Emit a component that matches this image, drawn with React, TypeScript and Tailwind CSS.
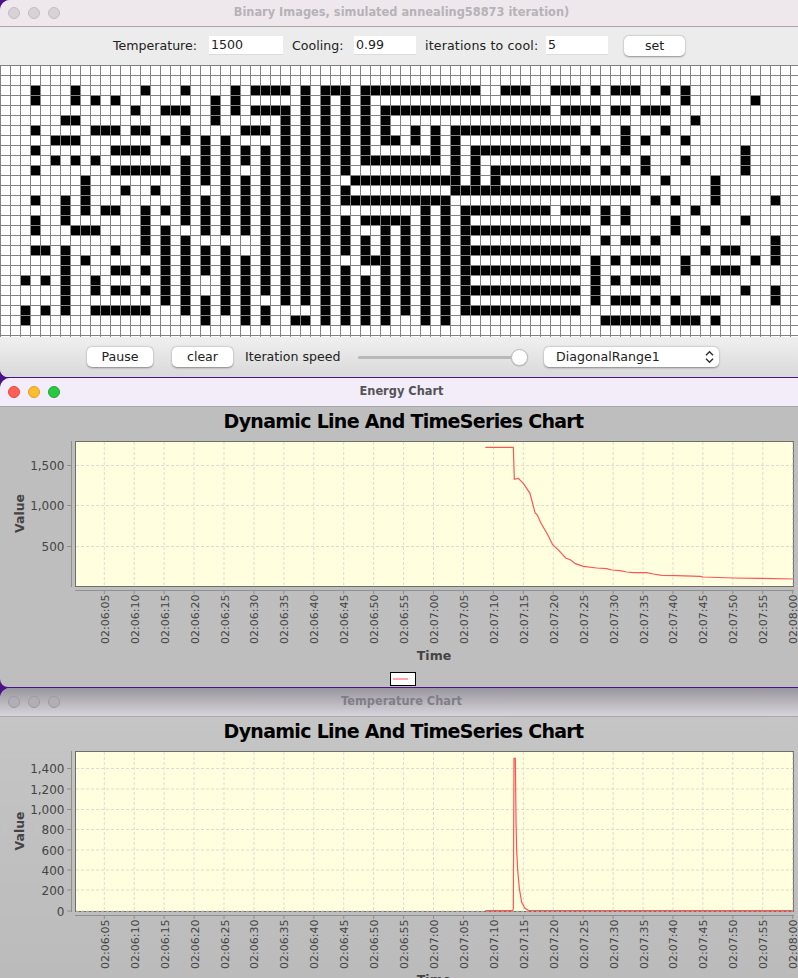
import React from "react";

// black cells per grid row, [from, to] column ranges
const rows: number[][][] = [
  [],
  [],
  [[3,3],[7,7],[14,14],[18,18],[23,23],[25,28],[30,30],[32,34],[36,47],[50,52],[55,57],[59,59],[61,63],[66,66],[68,68]],
  [[3,3],[7,7],[9,9],[11,11],[21,21],[23,23],[30,30],[32,32],[34,34],[36,36],[68,68],[75,75]],
  [[13,13],[16,18],[21,21],[23,23],[25,28],[30,30],[32,32],[34,34],[36,36],[38,54],[56,59],[61,62],[64,66]],
  [[6,7],[21,21],[28,28],[30,30],[32,32],[34,34],[36,36],[38,38],[69,69]],
  [[3,3],[9,11],[13,14],[18,18],[24,26],[28,28],[30,30],[32,32],[34,34],[36,36],[38,38],[41,41],[43,43],[45,57],[59,59],[62,62],[66,66]],
  [[5,7],[16,16],[18,18],[20,20],[22,22],[28,28],[30,30],[32,32],[34,34],[36,36],[38,39],[41,41],[43,43],[45,45],[62,62],[64,64],[68,68]],
  [[3,3],[11,14],[20,20],[22,22],[24,24],[26,26],[28,28],[30,30],[32,32],[34,34],[36,36],[43,43],[45,45],[47,56],[58,58],[60,60],[62,62],[74,74]],
  [[5,5],[7,7],[9,9],[18,18],[20,20],[22,22],[24,24],[26,26],[28,28],[30,30],[32,32],[34,34],[36,43],[45,45],[47,47],[64,64],[68,68],[74,74]],
  [[3,3],[11,16],[18,18],[20,20],[22,22],[26,26],[28,28],[30,30],[32,32],[34,34],[45,45],[47,47],[49,58],[60,60],[62,62],[64,64],[74,74]],
  [[8,8],[18,18],[20,20],[22,22],[24,24],[26,26],[28,28],[30,30],[32,32],[35,45],[47,47],[49,49],[66,66],[71,71]],
  [[8,8],[12,12],[15,15],[18,18],[22,22],[24,24],[26,26],[28,28],[30,30],[32,32],[34,34],[45,63],[71,71]],
  [[3,3],[6,6],[8,8],[18,18],[20,20],[22,22],[24,24],[26,26],[28,28],[30,30],[32,32],[34,44],[65,65],[67,67],[71,71],[77,77]],
  [[6,6],[8,8],[10,11],[14,14],[16,16],[18,18],[20,20],[22,22],[24,24],[26,26],[28,28],[30,30],[32,32],[42,42],[44,44],[46,54],[56,58],[60,60],[62,62],[69,69]],
  [[3,3],[6,6],[14,14],[18,18],[20,20],[22,22],[24,24],[26,26],[28,28],[30,30],[32,32],[34,34],[36,40],[42,42],[44,44],[46,46],[60,60],[62,62],[67,67],[74,74]],
  [[3,3],[7,9],[14,14],[16,16],[20,20],[22,22],[24,24],[26,26],[28,28],[30,30],[32,32],[34,34],[38,38],[40,40],[42,42],[44,44],[46,58],[67,67],[70,70]],
  [[14,14],[16,16],[18,18],[26,26],[28,28],[30,30],[32,32],[34,34],[36,36],[38,38],[40,40],[42,42],[44,44],[46,46],[60,60],[62,63],[65,65],[77,77]],
  [[3,4],[6,6],[11,11],[14,14],[16,16],[18,18],[20,20],[22,22],[26,26],[28,28],[30,30],[32,32],[34,34],[36,36],[38,38],[40,40],[42,42],[44,44],[46,57],[70,70],[72,73],[77,77]],
  [[6,6],[8,8],[16,16],[18,18],[20,20],[22,22],[24,24],[26,26],[28,28],[30,30],[32,32],[36,38],[40,40],[42,42],[44,44],[46,46],[59,59],[61,61],[63,65],[68,68],[75,75],[77,77]],
  [[6,6],[11,12],[14,14],[16,16],[18,18],[20,20],[22,22],[24,24],[26,26],[28,28],[30,30],[32,32],[34,34],[38,38],[40,40],[42,42],[44,44],[46,57],[59,59],[68,68],[71,73]],
  [[2,2],[4,4],[6,6],[9,9],[16,16],[18,18],[22,22],[24,24],[26,26],[28,28],[30,30],[32,32],[34,34],[36,36],[38,38],[40,40],[42,42],[44,44],[46,46],[59,59],[61,61],[63,65]],
  [[6,6],[9,9],[11,12],[14,14],[16,16],[18,18],[22,22],[24,24],[26,26],[28,28],[30,30],[32,32],[34,34],[36,36],[38,38],[40,40],[42,42],[44,44],[46,57],[59,59],[74,74],[77,77]],
  [[6,6],[16,16],[18,18],[20,20],[22,22],[24,24],[28,28],[30,30],[32,32],[34,34],[36,36],[38,38],[40,40],[42,42],[44,44],[46,46],[59,59],[61,63],[65,65],[67,67],[70,71],[77,77]],
  [[2,2],[4,4],[6,6],[9,14],[18,18],[20,20],[22,22],[24,24],[26,26],[32,32],[34,34],[36,36],[38,38],[40,40],[42,42],[44,44],[46,57]],
  [[2,2],[20,20],[24,24],[26,26],[29,30],[32,32],[34,34],[36,36],[38,38],[42,42],[44,44],[60,65],[67,69],[71,71]],
  [],
  [],
];

const isBlack = (r: number, c: number) => rows[r].some(([a, b]) => c >= a && c <= b);

const CellGrid = () => (
  <div className="h-[272px] w-full shrink-0 overflow-hidden bg-white">
    {rows.map((_, r) => (
      <div key={r} className="flex h-[10px] w-[800px]">
        {Array.from({ length: 80 }, (_, c) => (
          <div
            key={c}
            className={`h-[10px] w-[10px] shrink-0 border-t border-l border-[#828282] ${isBlack(r, c) ? "bg-black" : "bg-white"}`}
          />
        ))}
      </div>
    ))}
  </div>
);

const Lights = ({ colors }: { colors: string[] }) => (
  <div className="flex gap-2 pl-2">
    {colors.map((cn, i) => (
      <span key={i} className={`h-3 w-3 rounded-full border ${cn}`} />
    ))}
  </div>
);

const TitleBar = ({
  title,
  lights,
  className,
  textClass,
}: {
  title: string;
  lights: string[];
  className: string;
  textClass: string;
}) => (
  <div className={`relative flex shrink-0 items-center border-b border-[#a9a7ab] ${className}`}>
    <Lights colors={lights} />
    <p className={`absolute left-[5px] right-0 text-center text-[11.4px] font-bold ${textClass}`}>{title}</p>
  </div>
);

const Field = ({ value, w }: { value: string; w: string }) => (
  <div className={`mb-px flex h-[19px] items-center border-b border-[#dcdcdc] bg-white pl-[2px] text-[#222] ${w}`}>
    {value}
  </div>
);

const MacButton = ({ label, w }: { label: string; w: string }) => (
  <button className={`h-5 rounded-[5px] bg-white text-[12.6px] leading-[18px] text-[#222] shadow-[0_0.5px_2px_rgba(0,0,0,0.4)] ${w}`}>
    {label}
  </button>
);

const pad = (n: number) => String(n).padStart(2, "0");
const timeTicks = Array.from({ length: 24 }, (_, i) => {
  const total = 6 * 60 + 5 + i * 5;
  return { x: 104.3 + i * 29.93, label: `02:${pad(Math.floor(total / 60))}:${pad(total % 60)}` };
});

// traced at 3x from x=460, so scale back down into svg coords
const toPoints = (raw: string) =>
  raw
    .split(" ")
    .map((p) => {
      const [x, y] = p.split(",").map(Number);
      return `${460 + x / 3},${y / 3 - 4}`;
    })
    .join(" ");

const energyLine = toPoints(
  "76,52 160,52 163,148 175,145 190,160 210,190 225,248 232,255 243,280 262,312 278,344 297,362 317,384 332,390 346,401 370,409 410,414 440,416 456,420 480,422 500,426 520,428 560,428 580,432 605,436 650,437 720,439 730,441 820,444 900,445 998,447"
);

const tempLine = toPoints(
  "76,512 158,512 160,505 162,55 166,55 168,240 170,330 173,390 178,445 185,487 195,505 205,511 998,512"
);

const AXIS = "#8f8f8f";
const LABEL = "#444444";
const GRIDLINE = "#dcdcd0";

const Chart = ({
  height,
  top,
  bottom,
  ticks,
  points,
  legend,
  timeY,
}: {
  height: number;
  top: number;
  bottom: number;
  ticks: { y: number; label: string }[];
  points: string;
  legend?: boolean;
  timeY: number;
}) => (
  <svg width="798" height={height} className="block shrink-0" fontFamily="'DejaVu Sans', sans-serif">
    <rect x="75.5" y={top + 0.5} width="718" height={bottom - top} fill="#ffffe0" stroke="#6f6f6a" />
    {timeTicks.map((t) => (
      <line key={t.label} x1={t.x} x2={t.x} y1={top + 1} y2={bottom} stroke={GRIDLINE} strokeDasharray="3 2" />
    ))}
    {ticks.map((t) => (
      <line key={t.label} x1="76" x2="793" y1={t.y} y2={t.y} stroke={GRIDLINE} strokeDasharray="3 2" />
    ))}
    <polyline points={points} fill="none" stroke="#ff5555" strokeWidth="1.2" />
    <line x1="71.5" x2="71.5" y1={top} y2={bottom + 1} stroke={AXIS} />
    <line x1="75" x2="794" y1={bottom + 4.5} y2={bottom + 4.5} stroke={AXIS} />
    {ticks.map((t) => (
      <g key={t.label}>
        <line x1="67" x2="71" y1={t.y} y2={t.y} stroke={AXIS} />
        <text x="64.5" y={t.y + 4.5} fontSize="12" textAnchor="end" fill={LABEL}>
          {t.label}
        </text>
      </g>
    ))}
    {timeTicks.map((t) => (
      <g key={t.label}>
        <line x1={t.x} x2={t.x} y1={bottom + 5} y2={bottom + 8} stroke={AXIS} />
        <text
          transform={`translate(${t.x + 4.5} ${bottom + 58}) rotate(-90)`}
          fontSize="11"
          fill={LABEL}
        >
          {t.label}
        </text>
      </g>
    ))}
    <text
      transform={`translate(24 ${(top + bottom) / 2 + 19.5}) rotate(-90)`}
      fontSize="12.5"
      fontWeight="bold"
      fill={LABEL}
    >
      Value
    </text>
    <text x="434" y={timeY} fontSize="12.5" fontWeight="bold" textAnchor="middle" fill={LABEL}>
      Time
    </text>
    {legend && (
      <g>
        <rect x="390.5" y={bottom + 86.5} width="25" height="13" fill="#fff" stroke="#000" />
        <line x1="393" x2="408" y1={bottom + 93} y2={bottom + 93} stroke="#ffa8a8" strokeWidth="2" />
      </g>
    )}
  </svg>
);

const ChartTitle = () => (
  <h2 className="shrink-0 pl-[9px] text-center text-[19px] leading-[26px] font-bold tracking-[-0.7px] text-black">
    Dynamic Line And TimeSeries Chart
  </h2>
);

export default function App() {
  return (
    <div className="h-[978px] w-[798px] overflow-hidden bg-[#4a1488] font-['DejaVu_Sans',sans-serif]">
      {/* simulation window */}
      <div className="flex h-[377px] flex-col overflow-hidden rounded-tl-[10px] rounded-bl-[8px] bg-[#ececec]">
        <TitleBar
          title="Binary Images, simulated annealing58873 iteration)"
          lights={[
            "border-[#c2bcc1] bg-[#d8d2d7]",
            "border-[#c2bcc1] bg-[#d8d2d7]",
            "border-[#c2bcc1] bg-[#d8d2d7]",
          ]}
          className="h-[27px] bg-[#eee8ed]"
          textClass="text-[#b6b2b6]"
        />
        <div className="flex h-[38px] shrink-0 items-center pl-[113px] text-[12.6px] text-[#222]">
          <span className="w-[96px]">Temperature:</span>
          <Field value="1500" w="w-[74px]" />
          <span className="ml-[9px] w-[62px]">Cooling:</span>
          <Field value="0.99" w="w-[62px]" />
          <span className="ml-[9px] w-[121px] tracking-[0.15px]">iterations to cool:</span>
          <Field value="5" w="w-[62px]" />
          <div className="ml-[16px]">
            <MacButton label="set" w="w-[61px]" />
          </div>
        </div>
        <CellGrid />
        <div className="flex h-[40px] shrink-0 items-center bg-gradient-to-b from-[#f0f0f0] to-[#d9d9d9] pl-[87px] text-[12.6px] text-[#222]">
          <MacButton label="Pause" w="w-[66px]" />
          <div className="ml-[19px]">
            <MacButton label="clear" w="w-[61px]" />
          </div>
          <span className="ml-[12px] w-[113px]">Iteration speed</span>
          <div className="flex w-[170px] items-center">
            <div className="h-[3px] flex-1 rounded-l-full bg-[#b8b8b8]" />
            <div className="h-[17px] w-[17px] shrink-0 rounded-full border border-[#bdbdbd] bg-white shadow-[0_0.5px_1px_rgba(0,0,0,0.25)]" />
          </div>
          <div className="ml-[16px] flex h-[20px] w-[175px] items-center justify-between rounded-[5px] bg-white pr-[5px] pl-[12px] shadow-[0_0.5px_2px_rgba(0,0,0,0.4)]">
            <span>DiagonalRange1</span>
            <svg width="9" height="14" viewBox="0 0 9 14" fill="none" stroke="#333" strokeWidth="1.5">
              <path d="M1 5.2 4.5 1.8 8 5.2" />
              <path d="M1 8.8 4.5 12.2 8 8.8" />
            </svg>
          </div>
        </div>
      </div>

      {/* energy window */}
      <div className="mt-px flex h-[309px] flex-col overflow-hidden rounded-tl-[10px] rounded-bl-[8px] bg-[#bebebe]">
        <TitleBar
          title="Energy Chart"
          lights={[
            "border-[#e5483f] bg-[#ff5f57]",
            "border-[#dd9f26] bg-[#febc2e]",
            "border-[#1fa831] bg-[#28c840]",
          ]}
          className="h-[29px] bg-[#f3edf9]"
          textClass="text-[#555357]"
        />
        <div className="shrink-0 pt-[1px]">
          <ChartTitle />
        </div>
        <Chart
          height={254}
          top={7}
          bottom={152}
          ticks={[
            { y: 31.5, label: "1,500" },
            { y: 71.5, label: "1,000" },
            { y: 112.5, label: "500" },
          ]}
          points={energyLine}
          legend
          timeY={226}
        />
      </div>

      {/* temperature window */}
      <div className="mt-px flex h-[290px] flex-col overflow-hidden rounded-tl-[10px] bg-gradient-to-b from-[#c6c6c6] to-[#bbbbbb]">
        <TitleBar
          title="Temperature Chart"
          lights={[
            "border-[#9d9ba1] bg-[#b1afb5]",
            "border-[#9d9ba1] bg-[#b1afb5]",
            "border-[#9d9ba1] bg-[#b1afb5]",
          ]}
          className="h-[29px] bg-gradient-to-b from-[#98969e] to-[#d8d4dc]"
          textClass="text-[#807e86]"
        />
        <div className="shrink-0 pt-[1px]">
          <ChartTitle />
        </div>
        <Chart
          height={244}
          top={7}
          bottom={167}
          ticks={[
            { y: 24.5, label: "1,400" },
            { y: 45, label: "1,200" },
            { y: 65.5, label: "1,000" },
            { y: 85.5, label: "800" },
            { y: 106, label: "600" },
            { y: 126, label: "400" },
            { y: 146, label: "200" },
            { y: 167, label: "0" },
          ]}
          points={tempLine}
          timeY={240}
        />
      </div>
    </div>
  );
}
